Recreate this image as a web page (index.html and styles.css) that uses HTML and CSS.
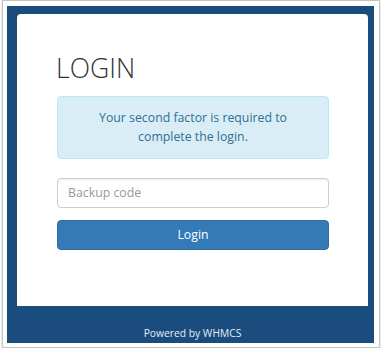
FILE: index.html
```html
<!DOCTYPE html>
<html>
<head>
<meta charset="utf-8">
<link rel="stylesheet" href="styles.css">
</head>
<body>
<div class="window">
  <div class="stage">
    <div class="card">
      <h1 class="title">LOGIN</h1>
      <div class="alert">Your second factor is required to complete the login.</div>
      <form class="form">
        <input class="field" type="text" placeholder="Backup code">
        <button class="btn" type="button">Login</button>
      </form>
    </div>
    <div class="footer">Powered by WHMCS</div>
  </div>
</div>
</body>
</html>
```

FILE: styles.css
```css
html, body {
  margin: 0;
  padding: 0;
  background: #fff;
}
body {
  font-family: "Open Sans", "DejaVu Sans", sans-serif;
  font-size: 12.3px;
  line-height: 19px;
  color: #333;
}
.window {
  margin: 0 1px 0 2px;
  border: 1px solid #c4c4c4;
  padding: 5px 5px 4px 4px;
  box-shadow: 0 1px 2px rgba(0, 0, 0, 0.25);
}
.stage {
  background: #1b4c7e;
  height: 337px;
  padding: 8px 6px 0 10px;
  box-sizing: border-box;
  display: flex;
  flex-direction: column;
}
.card {
  background: #fff;
  border-radius: 4px 4px 0 0;
  height: 292px;
  box-sizing: border-box;
  padding: 39px 39px 0 40px;
}
.title {
  margin: 0 0 0 -1px;
  font-weight: 300;
  font-size: 26.6px;
  line-height: 30.8px;
  color: #333;
}
.alert {
  margin-top: 12px;
  background: #d9edf7;
  border: 1px solid #bce8f1;
  border-radius: 4px;
  color: #31708f;
  text-align: center;
  padding: 11px 15px 12px;
}
.form {
  margin-top: 19px;
  display: flex;
  flex-direction: column;
  gap: 12px;
}
.field {
  height: 30px;
  box-sizing: border-box;
  border: 1px solid #ccc;
  border-radius: 4px;
  padding: 0 10px;
  font-family: inherit;
  font-size: 12.3px;
  color: #555;
  box-shadow: inset 0 1px 1px rgba(0, 0, 0, 0.075);
}
.field::placeholder {
  color: #999;
}
.btn {
  height: 30px;
  border: 1px solid #2e6da4;
  border-radius: 4px;
  background: #337ab7;
  color: #fff;
  font-family: inherit;
  font-size: 12.3px;
}
.footer {
  flex: 1;
  display: flex;
  align-items: flex-end;
  justify-content: center;
  padding-bottom: 2px;
  color: #e6edf5;
  font-size: 10.3px;
  line-height: 15px;
}
```
